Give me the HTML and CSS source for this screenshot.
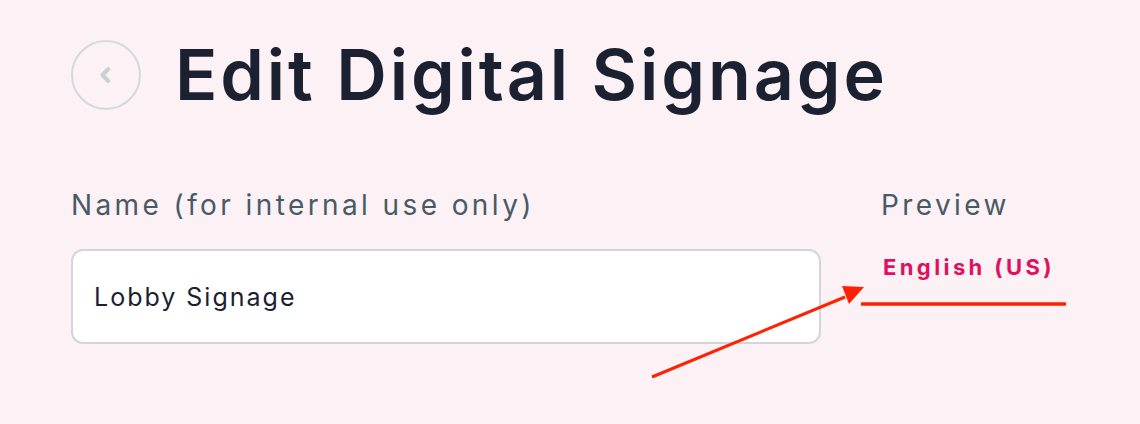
FILE: index.html
```html
<!DOCTYPE html>
<html>
<head>
<meta charset="utf-8">
<link rel="stylesheet" href="styles.css">
</head>
<body>
<div class="page">
  <header class="header">
    <button class="back" aria-label="Back">
      <svg width="20" height="20" viewBox="0 0 20 20"><path d="M12.2 4 L6.4 10 L12.2 16" fill="none" stroke="#c9d1d4" stroke-width="4" stroke-linecap="round" stroke-linejoin="round"/></svg>
    </button>
    <h1 class="title">Edit Digital Signage</h1>
  </header>
  <div class="form">
    <div class="field">
      <label class="label">Name (for internal use only)</label>
      <div class="input">Lobby Signage</div>
    </div>
    <div class="preview">
      <div class="label">Preview</div>
      <div class="tabs"><span class="tab">English (US)</span></div>
    </div>
  </div>
  <svg class="annot" width="1140" height="424" viewBox="0 0 1140 424">
    <line x1="861" y1="304" x2="1066" y2="304" stroke="#ff2200" stroke-width="3.5"/>
    <line x1="652" y1="377" x2="845" y2="297" stroke="#ff2200" stroke-width="3"/>
    <polygon points="864,287 842,286 849,304" fill="#ff2200"/>
  </svg>
</div>
</body>
</html>
```
FILE: styles.css
```css
html, body { margin: 0; padding: 0; }
body {
  background: #fcf1f5;
  font-family: Inter, "Noto Sans", sans-serif;
  width: 1140px;
  height: 424px;
  overflow: hidden;
}
.page { position: relative; padding: 38px 0 0 71px; }
.header { display: flex; align-items: center; gap: 34px; }
.back {
  width: 70px; height: 70px; border-radius: 50%;
  border: 2px solid #d3d9dc; background: transparent;
  display: flex; align-items: center; justify-content: center;
  padding: 0; box-sizing: border-box;
}
.title {
  margin: 0; font-size: 70px; font-weight: 600; color: #1b2130;
  letter-spacing: 2.9px; line-height: 74px;
}
.form { display: flex; gap: 60px; margin-top: 76px; }
.field { width: 750px; }
.label { font-size: 28px; color: #485a65; line-height: 34px; font-weight: 400; letter-spacing: 3.4px; }
.input {
  margin-top: 27px; height: 95px; box-sizing: border-box;
  border: 2px solid #d2d6da; border-radius: 12px; background: #fff;
  display: flex; align-items: center; padding: 0 0 0 21px;
  font-size: 25px; color: #1b2130; letter-spacing: 2px;
}
.tabs { margin-top: 32px; padding-left: 2px; }
.tab { font-size: 22px; font-weight: 700; color: #e0105f; letter-spacing: 3.4px; }
.annot { position: absolute; left: 0; top: 0; pointer-events: none; }
```
